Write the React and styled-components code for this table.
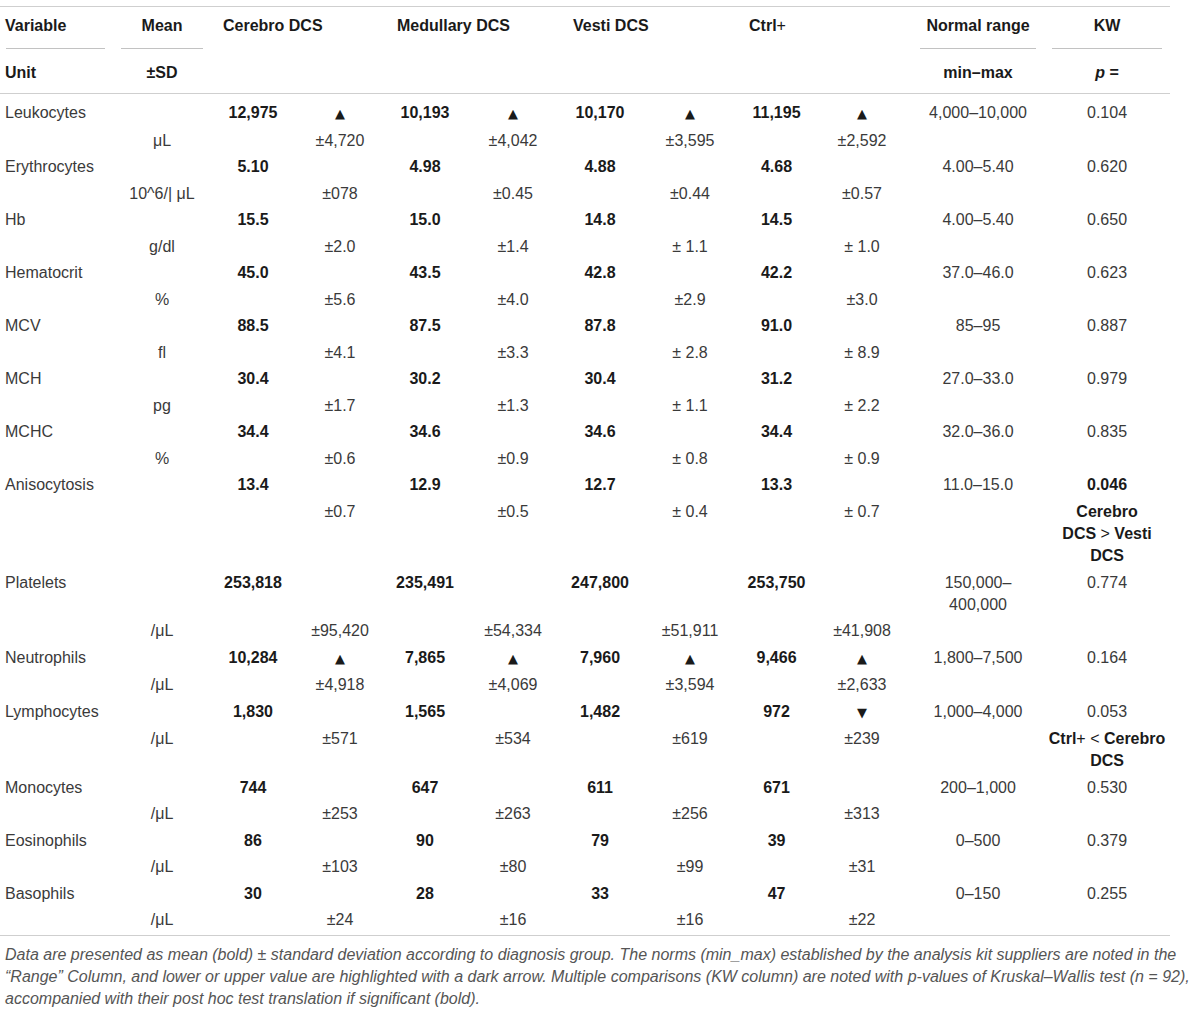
import React from 'react';
import styled, { createGlobalStyle } from 'styled-components';

const GlobalStyle = createGlobalStyle`
  body {
    margin: 0;
    background: #ffffff;
  }
`;

const Page = styled.div`
  padding-top: 6px;
  width: 1200px;
  font-family: 'Liberation Sans', Arial, Helvetica, sans-serif;
  color: #3a3a3a;
`;

const Table = styled.table`
  border-collapse: collapse;
  table-layout: fixed;
  width: 1170px;
  font-size: 16px;
  line-height: 22px;
  border-top: 1px solid #cfcfcf;
  border-bottom: 1px solid #cfcfcf;
`;

const Col = styled.col`
  width: ${(p) => p.$w}px;
`;

const HeadRow = styled.tr`
  border-bottom: ${(p) => (p.$line ? '1px solid #cfcfcf' : 'none')};
`;

const Th = styled.th`
  padding: ${(p) => (p.$second ? '13px 0 9px' : '8px 0 0')};
  padding-left: ${(p) => p.$pl || 0}px;
  text-align: ${(p) => p.$align || 'left'};
  vertical-align: top;
  font-weight: 700;
  color: #1a1a1a;
  white-space: nowrap;
`;

const Rule = styled.div`
  border-top: 1px solid #c2c2c2;
  margin: 11px 8px 0 ${(p) => (p.$ml != null ? p.$ml : 8)}px;
`;

const Light = styled.span`
  font-weight: 400;
`;

const Row = styled.tr`
  &:first-child td {
    padding-top: 8px;
  }
  &:last-child td {
    padding-bottom: 4px;
  }
`;

const Td = styled.td`
  padding: 2.28px 0;
  padding-left: ${(p) => p.$pl || 0}px;
  text-align: ${(p) => p.$align || 'center'};
  vertical-align: top;
  font-weight: ${(p) => (p.$bold ? 700 : 400)};
  color: ${(p) => (p.$bold ? '#1a1a1a' : '#3a3a3a')};
`;

const Arrow = styled.span`
  font-family: 'DejaVu Sans', sans-serif;
  font-size: 13px;
  color: #1a1a1a;
`;

const Note = styled.p`
  margin: 0;
  padding: 8px 0 0 5px;
  width: 1195px;
  font-size: 16px;
  line-height: 22px;
  font-style: italic;
  color: #555555;
  white-space: nowrap;
`;

const widths = [113, 98, 84, 90, 80, 96, 78, 102, 71, 100, 132, 126];

const groups = ['Cerebro DCS', 'Medullary DCS', 'Vesti DCS'];

const rows = [
  {
    name: 'Leukocytes',
    unit: 'μL',
    vals: [
      ['12,975', '▲', '±4,720'],
      ['10,193', '▲', '±4,042'],
      ['10,170', '▲', '±3,595'],
      ['11,195', '▲', '±2,592'],
    ],
    range: '4,000–10,000',
    p: '0.104',
  },
  {
    name: 'Erythrocytes',
    unit: '10^6/| μL',
    vals: [
      ['5.10', '', '±078'],
      ['4.98', '', '±0.45'],
      ['4.88', '', '±0.44'],
      ['4.68', '', '±0.57'],
    ],
    range: '4.00–5.40',
    p: '0.620',
  },
  {
    name: 'Hb',
    unit: 'g/dl',
    vals: [
      ['15.5', '', '±2.0'],
      ['15.0', '', '±1.4'],
      ['14.8', '', '± 1.1'],
      ['14.5', '', '± 1.0'],
    ],
    range: '4.00–5.40',
    p: '0.650',
  },
  {
    name: 'Hematocrit',
    unit: '%',
    vals: [
      ['45.0', '', '±5.6'],
      ['43.5', '', '±4.0'],
      ['42.8', '', '±2.9'],
      ['42.2', '', '±3.0'],
    ],
    range: '37.0–46.0',
    p: '0.623',
  },
  {
    name: 'MCV',
    unit: 'fl',
    vals: [
      ['88.5', '', '±4.1'],
      ['87.5', '', '±3.3'],
      ['87.8', '', '± 2.8'],
      ['91.0', '', '± 8.9'],
    ],
    range: '85–95',
    p: '0.887',
  },
  {
    name: 'MCH',
    unit: 'pg',
    vals: [
      ['30.4', '', '±1.7'],
      ['30.2', '', '±1.3'],
      ['30.4', '', '± 1.1'],
      ['31.2', '', '± 2.2'],
    ],
    range: '27.0–33.0',
    p: '0.979',
  },
  {
    name: 'MCHC',
    unit: '%',
    vals: [
      ['34.4', '', '±0.6'],
      ['34.6', '', '±0.9'],
      ['34.6', '', '± 0.8'],
      ['34.4', '', '± 0.9'],
    ],
    range: '32.0–36.0',
    p: '0.835',
  },
  {
    name: 'Anisocytosis',
    unit: '',
    vals: [
      ['13.4', '', '±0.7'],
      ['12.9', '', '±0.5'],
      ['12.7', '', '± 0.4'],
      ['13.3', '', '± 0.7'],
    ],
    range: '11.0–15.0',
    p: '0.046',
    pBold: true,
    note: (
      <>
        Cerebro
        <br />
        DCS <Light>&gt;</Light> Vesti
        <br />
        DCS
      </>
    ),
  },
  {
    name: 'Platelets',
    unit: '/μL',
    vals: [
      ['253,818', '', '±95,420'],
      ['235,491', '', '±54,334'],
      ['247,800', '', '±51,911'],
      ['253,750', '', '±41,908'],
    ],
    range: (
      <>
        150,000–
        <br />
        400,000
      </>
    ),
    p: '0.774',
  },
  {
    name: 'Neutrophils',
    unit: '/μL',
    vals: [
      ['10,284', '▲', '±4,918'],
      ['7,865', '▲', '±4,069'],
      ['7,960', '▲', '±3,594'],
      ['9,466', '▲', '±2,633'],
    ],
    range: '1,800–7,500',
    p: '0.164',
  },
  {
    name: 'Lymphocytes',
    unit: '/μL',
    vals: [
      ['1,830', '', '±571'],
      ['1,565', '', '±534'],
      ['1,482', '', '±619'],
      ['972', '▼', '±239'],
    ],
    range: '1,000–4,000',
    p: '0.053',
    note: (
      <>
        Ctrl<Light>+</Light> <Light>&lt;</Light> Cerebro
        <br />
        DCS
      </>
    ),
  },
  {
    name: 'Monocytes',
    unit: '/μL',
    vals: [
      ['744', '', '±253'],
      ['647', '', '±263'],
      ['611', '', '±256'],
      ['671', '', '±313'],
    ],
    range: '200–1,000',
    p: '0.530',
  },
  {
    name: 'Eosinophils',
    unit: '/μL',
    vals: [
      ['86', '', '±103'],
      ['90', '', '±80'],
      ['79', '', '±99'],
      ['39', '', '±31'],
    ],
    range: '0–500',
    p: '0.379',
  },
  {
    name: 'Basophils',
    unit: '/μL',
    vals: [
      ['30', '', '±24'],
      ['28', '', '±16'],
      ['33', '', '±16'],
      ['47', '', '±22'],
    ],
    range: '0–150',
    p: '0.255',
  },
];

function VariableRows({ row }) {
  return (
    <>
      <Row>
        <Td $align="left" $pl={5}>
          {row.name}
        </Td>
        <Td />
        {row.vals.map((v, i) => (
          <React.Fragment key={i}>
            <Td $bold>{v[0]}</Td>
            <Td>{v[1] && <Arrow>{v[1]}</Arrow>}</Td>
          </React.Fragment>
        ))}
        <Td>{row.range}</Td>
        <Td $bold={row.pBold}>{row.p}</Td>
      </Row>
      <Row>
        <Td />
        <Td>{row.unit}</Td>
        {row.vals.map((v, i) => (
          <React.Fragment key={i}>
            <Td />
            <Td>{v[2]}</Td>
          </React.Fragment>
        ))}
        <Td />
        <Td $bold>{row.note}</Td>
      </Row>
    </>
  );
}

export default function App() {
  return (
    <Page>
      <GlobalStyle />
      <Table>
        <colgroup>
          {widths.map((w, i) => (
            <Col key={i} $w={w} />
          ))}
        </colgroup>
        <thead>
          <HeadRow>
            <Th $pl={5}>
              Variable
              <Rule $ml={1} />
            </Th>
            <Th $align="center">
              Mean
              <Rule />
            </Th>
            {groups.map((g) => (
              <Th key={g} colSpan={2} $pl={12}>
                {g}
              </Th>
            ))}
            <Th colSpan={2} $pl={8}>
              Ctrl<Light>+</Light>
            </Th>
            <Th $align="center">
              Normal range
              <Rule />
            </Th>
            <Th $align="center">
              KW
              <Rule />
            </Th>
          </HeadRow>
          <HeadRow $line>
            <Th $second $pl={5}>
              Unit
            </Th>
            <Th $second $align="center">
              ±SD
            </Th>
            <Th $second colSpan={8} />
            <Th $second $align="center">
              min–max
            </Th>
            <Th $second $align="center">
              <i>p</i> =
            </Th>
          </HeadRow>
        </thead>
        <tbody>
          {rows.map((r) => (
            <VariableRows key={r.name} row={r} />
          ))}
        </tbody>
      </Table>
      <Note>
        Data are presented as mean (bold) ± standard deviation according to diagnosis group. The
        norms (min_max) established by the analysis kit suppliers are noted in the
        <br />
        “Range” Column, and lower or upper value are highlighted with a dark arrow. Multiple
        comparisons (KW column) are noted with p-values of Kruskal–Wallis test (n = 92),
        <br />
        accompanied with their post hoc test translation if significant (bold).
      </Note>
    </Page>
  );
}
